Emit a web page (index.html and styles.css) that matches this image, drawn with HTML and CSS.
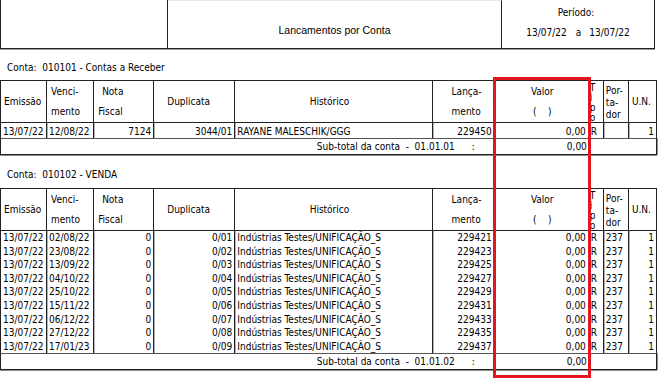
FILE: index.html
```html
<!DOCTYPE html>
<html lang="pt-BR">
<head>
<meta charset="utf-8">
<title>Lancamentos por Conta</title>
<link rel="stylesheet" href="styles.css">
</head>
<body>
<div class="page">
  <header class="report-head">
    <div class="head-logo"></div>
    <div class="head-title">Lancamentos por Conta</div>
    <div class="head-period">
      <div class="period-label">Período:</div>
      <div class="period-dates"><span>13/07/22</span><span class="sep">a</span><span>13/07/22</span></div>
    </div>
  </header>

  <div class="conta">Conta:&nbsp; 010101 - Contas a Receber</div>
  <table class="grid">
    <colgroup>
      <col style="width:47px"><col style="width:47px"><col style="width:60px"><col style="width:81px"><col style="width:197px"><col style="width:62px"><col style="width:94px"><col style="width:15px"><col style="width:25px"><col style="width:28px">
    </colgroup>
    <thead>
      <tr>
        <th class="h-emissao">Emissão</th>
        <th class="h-two">Venci-<br>mento</th>
        <th class="h-nota"><span class="nota">Nota</span><br>Fiscal</th>
        <th class="h-dup">Duplicata</th>
        <th class="h-hist">Histórico</th>
        <th class="h-lanc">Lança-<br>mento</th>
        <th class="h-valor">Valor<br>(&nbsp;&nbsp;&nbsp;&nbsp;)</th>
        <th class="h-tipo"><div class="tipo">T<br>i<br>p<br>o</div></th>
        <th class="h-port">Por-<br>ta-<br>dor</th>
        <th class="h-un">U.N.</th>
      </tr>
    </thead>
    <tbody>
      <tr class="single">
        <td>13/07/22</td><td>12/08/22</td><td class="r">7124</td><td class="r">3044/01</td><td>RAYANE MALESCHIK/GGG</td><td class="r">229450</td><td class="r">0,00</td><td>R</td><td></td><td class="r">1</td>
      </tr>
      <tr class="subtotal">
        <td colspan="6" class="sub-label"><span>Sub-total da conta&nbsp; -&nbsp; 01.01.01</span><span class="colon">:</span></td>
        <td class="r">0,00</td>
        <td colspan="3" class="sub-end"></td>
      </tr>
    </tbody>
  </table>

  <div class="conta conta-next">Conta:&nbsp; 010102 - VENDA</div>
  <table class="grid">
    <colgroup>
      <col style="width:47px"><col style="width:47px"><col style="width:60px"><col style="width:81px"><col style="width:197px"><col style="width:62px"><col style="width:94px"><col style="width:15px"><col style="width:25px"><col style="width:28px">
    </colgroup>
    <thead>
      <tr>
        <th class="h-emissao">Emissão</th>
        <th class="h-two">Venci-<br>mento</th>
        <th class="h-nota"><span class="nota">Nota</span><br>Fiscal</th>
        <th class="h-dup">Duplicata</th>
        <th class="h-hist">Histórico</th>
        <th class="h-lanc">Lança-<br>mento</th>
        <th class="h-valor">Valor<br>(&nbsp;&nbsp;&nbsp;&nbsp;)</th>
        <th class="h-tipo"><div class="tipo">T<br>i<br>p<br>o</div></th>
        <th class="h-port">Por-<br>ta-<br>dor</th>
        <th class="h-un">U.N.</th>
      </tr>
    </thead>
    <tbody>
      <tr><td>13/07/22</td><td>02/08/22</td><td class="r">0</td><td class="r">0/01</td><td>Indústrias Testes/UNIFICAÇÃO_S</td><td class="r">229421</td><td class="r">0,00</td><td>R</td><td>237</td><td class="r">1</td></tr>
      <tr><td>13/07/22</td><td>23/08/22</td><td class="r">0</td><td class="r">0/02</td><td>Indústrias Testes/UNIFICAÇÃO_S</td><td class="r">229423</td><td class="r">0,00</td><td>R</td><td>237</td><td class="r">1</td></tr>
      <tr><td>13/07/22</td><td>13/09/22</td><td class="r">0</td><td class="r">0/03</td><td>Indústrias Testes/UNIFICAÇÃO_S</td><td class="r">229425</td><td class="r">0,00</td><td>R</td><td>237</td><td class="r">1</td></tr>
      <tr><td>13/07/22</td><td>04/10/22</td><td class="r">0</td><td class="r">0/04</td><td>Indústrias Testes/UNIFICAÇÃO_S</td><td class="r">229427</td><td class="r">0,00</td><td>R</td><td>237</td><td class="r">1</td></tr>
      <tr><td>13/07/22</td><td>25/10/22</td><td class="r">0</td><td class="r">0/05</td><td>Indústrias Testes/UNIFICAÇÃO_S</td><td class="r">229429</td><td class="r">0,00</td><td>R</td><td>237</td><td class="r">1</td></tr>
      <tr><td>13/07/22</td><td>15/11/22</td><td class="r">0</td><td class="r">0/06</td><td>Indústrias Testes/UNIFICAÇÃO_S</td><td class="r">229431</td><td class="r">0,00</td><td>R</td><td>237</td><td class="r">1</td></tr>
      <tr><td>13/07/22</td><td>06/12/22</td><td class="r">0</td><td class="r">0/07</td><td>Indústrias Testes/UNIFICAÇÃO_S</td><td class="r">229433</td><td class="r">0,00</td><td>R</td><td>237</td><td class="r">1</td></tr>
      <tr><td>13/07/22</td><td>27/12/22</td><td class="r">0</td><td class="r">0/08</td><td>Indústrias Testes/UNIFICAÇÃO_S</td><td class="r">229435</td><td class="r">0,00</td><td>R</td><td>237</td><td class="r">1</td></tr>
      <tr><td>13/07/22</td><td>17/01/23</td><td class="r">0</td><td class="r">0/09</td><td>Indústrias Testes/UNIFICAÇÃO_S</td><td class="r">229437</td><td class="r">0,00</td><td>R</td><td>237</td><td class="r">1</td></tr>
      <tr class="subtotal">
        <td colspan="6" class="sub-label"><span>Sub-total da conta&nbsp; -&nbsp; 01.01.02</span><span class="colon">:</span></td>
        <td class="r">0,00</td>
        <td colspan="3" class="sub-end"></td>
      </tr>
    </tbody>
  </table>

  <div class="conta conta-last">Conta:&nbsp; 020101 - Vendas de Mercadorias - Contas Teste</div>

  <div class="highlight"></div>
</div>
</body>
</html>
```

FILE: styles.css
```css
html, body {
  margin: 0;
  padding: 0;
  background: #fff;
}

.page {
  position: relative;
  width: 665px;
  height: 385px;
  overflow: hidden;
  font-family: "DejaVu Sans Condensed", "DejaVu Sans", sans-serif;
  font-stretch: condensed;
  font-size: 10px;
  color: #000;
}

/* ---------- report header ---------- */
.report-head {
  display: flex;
  width: 655px;
  height: 48px;
  border-bottom: 1px solid #222;
  box-shadow: 0 1px 0 #9a9a9a;
}

.head-logo {
  width: 166px;
  border-left: 1px solid #222;
  border-right: 1px solid #222;
}

.head-title {
  width: 334px;
  border-right: 1px solid #222;
  border-top: 1px solid #e6e6e6;
  display: flex;
  align-items: center;
  justify-content: center;
  padding-top: 10px;
  box-sizing: border-box;
  font-family: "Liberation Sans", Arial, sans-serif;
  font-stretch: normal;
  font-size: 10.5px;
}

.head-period {
  flex: 1;
  border-right: 1px solid #222;
  display: flex;
  flex-direction: column;
  align-items: center;
  padding-top: 7px;
  gap: 8px;
  line-height: 12px;
}

.period-label {
  margin-left: -4px;
}

.period-dates .sep {
  margin: 0 8px 0 9px;
}

/* ---------- account label ---------- */
.conta {
  padding: 12px 0 6px 7px;
  line-height: 13px;
  height: 13px;
}

.conta.conta-next {
  padding-top: 13px;
  padding-bottom: 7px;
}

.conta.conta-last {
  padding-top: 13px;
}

/* ---------- grid tables ---------- */
.grid {
  border-collapse: separate;
  border-spacing: 0;
  table-layout: fixed;
  width: 657px;
}

.grid th,
.grid td {
  padding: 0 2px;
  border-right: 1px solid #222;
  white-space: nowrap;
  overflow: hidden;
  font-weight: normal;
  text-align: left;
}

.grid th:first-child,
.grid td:first-child {
  border-left: 1px solid #222;
}

.grid th {
  height: 41px;
  border-top: 1px solid #222;
  border-bottom: 1px solid #222;
  line-height: 20px;
  vertical-align: middle;
}

.grid td {
  height: 13.55px;
  line-height: 13px;
  padding-top: 0;
  padding-bottom: 0;
  box-shadow: inset 1px 0 0 #b4b4b4;
}

.grid td:first-child {
  box-shadow: none;
}

.grid tr.single td {
  height: 14px;
  padding-top: 1px;
}

.grid td.r {
  text-align: right;
}

.grid .h-emissao { padding-left: 3px; }
.grid .h-two { padding-left: 4px; }
.grid .h-nota { padding-left: 4px; }
.grid .h-nota .nota { padding-left: 4px; }
.grid .h-dup { padding-left: 13px; }
.grid .h-hist { text-align: center; padding-left: 0; padding-right: 8px; }
.grid .h-lanc { padding-left: 19px; }
.grid .h-valor { text-align: center; padding-left: 4px; }
.grid .h-tipo {
  padding: 0 0 0 1px;
  vertical-align: top;
}
.grid .tipo {
  height: 41px;
  overflow: hidden;
  line-height: 10px;
  padding-top: 2px;
  box-sizing: border-box;
}
.grid .h-port {
  line-height: 12px;
  padding: 4px 0 0 2px;
  vertical-align: top;
  height: 37px;
}
.grid .h-un { padding-left: 3px; }

/* sub-total rows */
.grid tr.subtotal td {
  height: 15px;
  border-top: 1px solid #555;
  border-bottom: 1px solid #222;
  border-right: none;
  box-shadow: 0 1px 0 #8e8e8e;
  padding-top: 0;
}

.grid tr.subtotal td.sub-label {
  border-left: 1px solid #222;
  text-align: right;
  padding-right: 20px;
}

.grid tr.subtotal td.sub-label .colon {
  margin-left: 17px;
}

.grid tr.subtotal td.sub-end {
  border-right: 1px solid #222;
  box-shadow: 0 1px 0 #8e8e8e, 1px 0 0 #8e8e8e;
}

/* annotation overlay */
.highlight {
  position: absolute;
  left: 493px;
  top: 77px;
  width: 92px;
  height: 295px;
  border: 3px solid #e4151f;
}
```
